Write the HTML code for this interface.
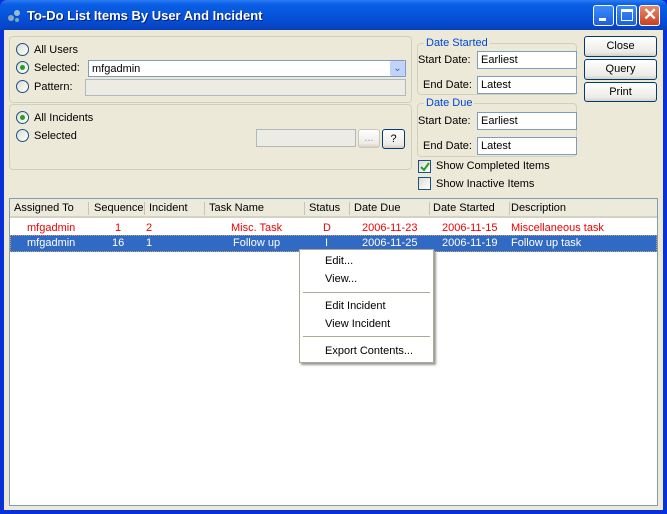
<!DOCTYPE html>
<html><head><style>
*{box-sizing:border-box;margin:0;padding:0}
body{width:667px;height:514px;overflow:hidden;font-family:"Liberation Sans",sans-serif;font-size:11px;background:#0831d9;position:relative}
.a{position:absolute}
.win{left:4px;top:30px;width:659px;height:480px;background:#ece9d8}
.title{left:0;top:0;width:667px;height:30px;background:linear-gradient(#2c7bf5 0%,#0a5fe5 15%,#0653dc 50%,#0546c8 90%,#0a3fb0 100%);border-radius:7px 7px 0 0}
.tt{color:#fff;font-weight:bold;font-size:13px;left:27px;top:8px;text-shadow:1px 1px #0a1e6e}
.tb{top:5px;width:21px;height:21px;border:1px solid #fff;border-radius:3px;background:linear-gradient(#3d8cfa,#1d5fe0)}
.grp{border:1px solid #d0d0bf;border-radius:4px}
.lbl{color:#0046d5;background:#ece9d8;padding:0 2px}
.rad{width:13px;height:13px;border-radius:50%;border:1px solid #1c5180;background:linear-gradient(135deg,#dcdcd4,#fff)}
.dot{position:absolute;left:3px;top:3px;width:5px;height:5px;border-radius:50%;background:#21a121}
.fld{border:1px solid #7f9db9;background:#fff;padding:2px 3px;height:18px;line-height:12px}
.dis{background:#ecebe4;border-color:#b0b8c0}
.btn{border:1px solid #003c74;border-radius:3px;background:linear-gradient(#fff,#ecebe6 80%,#d6d0c5);text-align:center;line-height:19px}
.chk{width:13px;height:13px;border:1px solid #1c5180;background:linear-gradient(135deg,#dcdcd4,#fff)}
.list{left:9px;top:198px;width:649px;height:308px;border:1px solid #7f9db9;background:#fff}
.hd{top:0;height:19px;width:647px;background:#ebeadb;border-bottom:2px solid #d6d2c2}
.hc{top:3px}
.sep{top:3px;width:1px;height:13px;background:#c7c5b2}
.r{color:#e00}
.menu{left:299px;top:249px;width:135px;height:114px;background:#fff;border:1px solid #aca899;box-shadow:2px 2px 2px #999}
.mi{left:25px}
.ms{left:3px;width:127px;height:1px;background:#aca899}
</style></head><body>
<div class="a title"></div>
<svg class="a" style="left:6px;top:8px" width="16" height="16"><circle cx="5" cy="10" r="3" fill="#8ab" /><circle cx="11" cy="5" r="3" fill="#9bc"/><circle cx="11" cy="12" r="2" fill="#7ab"/></svg>
<div class="a tt">To-Do List Items By User And Incident</div>
<div class="a tb" style="left:593px"><div class="a" style="left:5px;top:12px;width:7px;height:3px;background:#fff"></div></div>
<div class="a tb" style="left:616px"><div class="a" style="left:4px;top:3px;width:12px;height:12px;border:1px solid #fff;border-top-width:3px"></div></div>
<div class="a tb" style="left:639px;background:linear-gradient(#e88a6a,#c8411f)"><div class="a" style="left:3px;top:-1px;color:#fff;font-size:17px;font-weight:bold">✕</div></div>
<div class="a win"></div>

<div class="a grp" style="left:9px;top:36px;width:403px;height:67px"></div>
<div class="a rad" style="left:16px;top:43px"></div><div class="a" style="left:34px;top:44px">All Users</div>
<div class="a rad" style="left:16px;top:61px"><div class="dot"></div></div><div class="a" style="left:34px;top:62px">Selected:</div>
<div class="a fld" style="left:88px;top:60px;width:318px;height:17px">mfgadmin</div>
<div class="a" style="left:390px;top:61px;width:15px;height:15px;background:#c1d3fb;border-radius:2px;color:#4d6185;font-size:10px;text-align:center;line-height:15px">⌄</div>
<div class="a rad" style="left:16px;top:80px"></div><div class="a" style="left:34px;top:81px">Pattern:</div>
<div class="a fld dis" style="left:85px;top:79px;width:321px;height:17px"></div>

<div class="a grp" style="left:9px;top:104px;width:403px;height:66px"></div>
<div class="a rad" style="left:16px;top:111px"><div class="dot"></div></div><div class="a" style="left:34px;top:112px">All Incidents</div>
<div class="a rad" style="left:16px;top:129px"></div><div class="a" style="left:34px;top:130px">Selected</div>
<div class="a fld dis" style="left:256px;top:129px;width:100px;height:18px"></div>
<div class="a btn" style="left:358px;top:129px;width:22px;height:19px;border-color:#c9c7ba;color:#999;line-height:16px">...</div>
<div class="a btn" style="left:382px;top:129px;width:23px;height:20px">?</div>

<div class="a grp" style="left:417px;top:43px;width:160px;height:52px"></div>
<div class="a lbl" style="left:424px;top:37px">Date Started</div>
<div class="a" style="left:418px;top:54px">Start Date:</div><div class="a fld" style="left:477px;top:51px;width:100px">Earliest</div>
<div class="a" style="left:423px;top:79px">End Date:</div><div class="a fld" style="left:477px;top:76px;width:100px">Latest</div>
<div class="a grp" style="left:417px;top:103px;width:160px;height:54px"></div>
<div class="a lbl" style="left:424px;top:97px">Date Due</div>
<div class="a" style="left:418px;top:115px">Start Date:</div><div class="a fld" style="left:477px;top:112px;width:100px">Earliest</div>
<div class="a" style="left:423px;top:140px">End Date:</div><div class="a fld" style="left:477px;top:137px;width:100px">Latest</div>
<div class="a chk" style="left:418px;top:160px"><svg class="a" style="left:1px;top:1px" width="10" height="10"><path d="M1 5l3 3l5-7" stroke="#21a121" stroke-width="2" fill="none"/></svg></div>
<div class="a" style="left:436px;top:160px">Show Completed Items</div>
<div class="a chk" style="left:418px;top:177px"></div>
<div class="a" style="left:436px;top:178px">Show Inactive Items</div>

<div class="a btn" style="left:584px;top:36px;width:73px;height:21px">Close</div>
<div class="a btn" style="left:584px;top:59px;width:73px;height:21px">Query</div>
<div class="a btn" style="left:584px;top:82px;width:73px;height:20px">Print</div>

<div class="a list">
<div class="a hd"></div>
<div class="a hc" style="left:4px">Assigned To</div><div class="a sep" style="left:78px"></div>
<div class="a hc" style="left:84px">Sequence</div><div class="a sep" style="left:134px"></div>
<div class="a hc" style="left:139px">Incident</div><div class="a sep" style="left:194px"></div>
<div class="a hc" style="left:199px">Task Name</div><div class="a sep" style="left:294px"></div>
<div class="a hc" style="left:299px">Status</div><div class="a sep" style="left:339px"></div>
<div class="a hc" style="left:344px">Date Due</div><div class="a sep" style="left:419px"></div>
<div class="a hc" style="left:423px">Date Started</div><div class="a sep" style="left:499px"></div>
<div class="a hc" style="left:501px">Description</div>
<div class="a r" style="left:17px;top:23px">mfgadmin</div>
<div class="a r" style="left:105px;top:23px">1</div>
<div class="a r" style="left:136px;top:23px">2</div>
<div class="a r" style="left:221px;top:23px">Misc. Task</div>
<div class="a r" style="left:313px;top:23px">D</div>
<div class="a r" style="left:352px;top:23px">2006-11-23</div>
<div class="a r" style="left:432px;top:23px">2006-11-15</div>
<div class="a r" style="left:501px;top:23px">Miscellaneous task</div>
<div class="a" style="left:0;top:36px;width:647px;height:17px;background:#316ac5;border:1px dotted #c5a25e;color:#fff">
<div class="a" style="left:16px;top:1px">mfgadmin</div>
<div class="a" style="left:101px;top:1px">16</div>
<div class="a" style="left:135px;top:1px">1</div>
<div class="a" style="left:222px;top:1px">Follow up</div>
<div class="a" style="left:314px;top:1px">I</div>
<div class="a" style="left:351px;top:1px">2006-11-25</div>
<div class="a" style="left:431px;top:1px">2006-11-19</div>
<div class="a" style="left:500px;top:1px">Follow up task</div>
</div>
</div>

<div class="a menu">
<div class="a mi" style="top:5px">Edit...</div>
<div class="a mi" style="top:23px">View...</div>
<div class="a ms" style="top:42px"></div>
<div class="a mi" style="top:50px">Edit Incident</div>
<div class="a mi" style="top:68px">View Incident</div>
<div class="a ms" style="top:86px"></div>
<div class="a mi" style="top:95px">Export Contents...</div>
</div>
</body></html>
